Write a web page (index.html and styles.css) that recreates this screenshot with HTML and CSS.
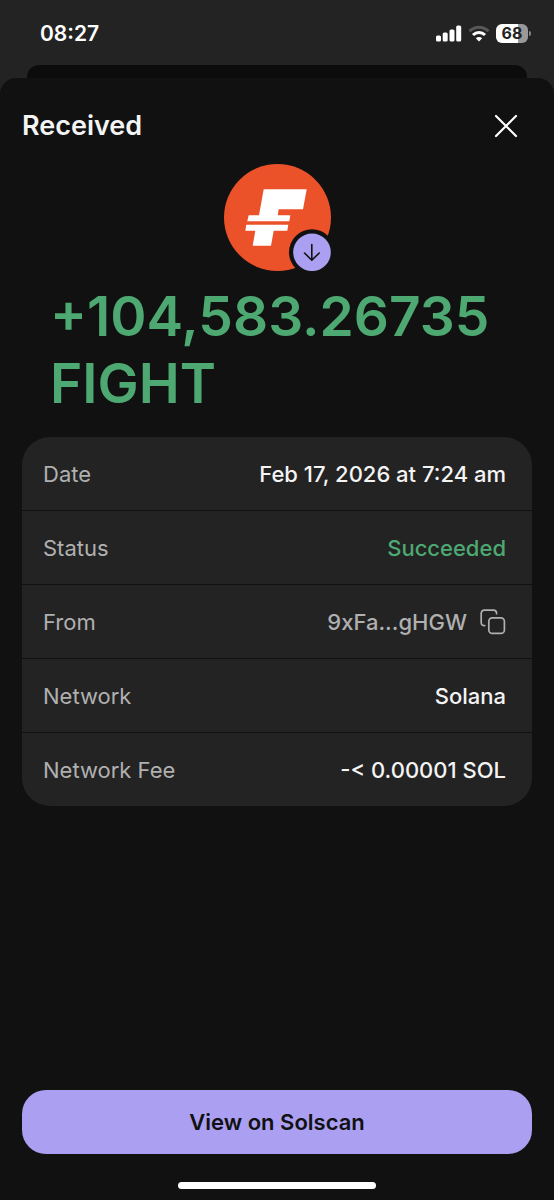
FILE: index.html
```html
<!DOCTYPE html>
<html lang="en">
    <head>
        <meta charset="utf-8">
        <meta name="viewport" content="width=device-width, initial-scale=1">
        <title>Received</title>
        <link rel="stylesheet" href="styles.css">
    </head>
    <body>
        <div class="statusbar">
            <span class="time">08:27</span>
            <div class="indicators">
                <svg class="signal" width="26" height="17" viewBox="0 0 26 17" fill="#fff">
                    <rect x="0" y="10.5" width="5" height="6" rx="1.5"/>
                    <rect x="6.7" y="7.5" width="5" height="9" rx="1.5"/>
                    <rect x="13.5" y="4.500" width="5" height="12" rx="1.5"/>
                    <rect x="20.2" y="0.5" width="5" height="16" rx="1.5"/>
                </svg>
                <svg class="wifi" width="22" height="17" viewBox="0 0 22 17" fill="none" stroke-width="3">
                    <path d="M1.5 6.2C6.700.8 15.300.8 20.5 6.2" stroke="#58585a"/>
                    <path d="M5 10C8.400 6.500 13.600 6.500 17 10" stroke="#fff"/>
                    <path d="M11 16.500L7.800 13.200C9.600 11.500 12.400 11.500 14.200 13.200Z" fill="#fff"/>
                </svg>
                <div class="battery">68</div>
            </div>
        </div>
        <div class="backsheet"></div>
        <main class="sheet">
            <header class="header">
                <h1>Received</h1>
                <button class="close" aria-label="Close">
                    <svg width="24" height="24" viewBox="0 0 24 24" fill="none" stroke="#fff" stroke-width="2.2" stroke-linecap="round">
                        <path d="M2 2L22 22M22 2L2 22"/>
                    </svg>
                </button>
            </header>

            <svg class="token" width="107" height="107" viewBox="0 0 107 107">
                <circle cx="53.5" cy="53.5" r="53.5" fill="#eb522a"/>
                <path fill="#fff" d="M39.7 25.3H82.7L79 45.3H54.7L53.7 51.3H66.3L65.3 57.3H23.3L24.7 51.3H35Z"/>
                <path fill="#fff" d="M22.3 60.7H64.3L63.3 66.7H49.7L47 81.7H28.7L31.3 66.7H21.3Z"/>
                <circle cx="88" cy="88.3" r="23" fill="#111"/>
                <circle cx="88" cy="88.3" r="18.8" fill="#ab9ff2"/>
                <path d="M87.8 80.5V96M80.5 89L87.8 96.2L95.2 89" fill="none" stroke="#111" stroke-width="1.6" stroke-linecap="round" stroke-linejoin="round"/>
            </svg>

            <p class="amount">+104,583.26735 FIGHT</p>

            <dl class="details">
                <div class="row">
                    <dt>Date</dt>
                    <dd>Feb 17, 2026 at 7:24 am</dd>
                </div>
                <div class="row">
                    <dt>Status</dt>
                    <dd class="succeeded">Succeeded</dd>
                </div>
                <div class="row">
                    <dt>From</dt>
                    <dd class="address">
                        9xFa...gHGW
                        <button class="copy" aria-label="Copy address">
                            <svg width="26" height="26" viewBox="0 0 26 26" fill="none" stroke="#b0b0b0" stroke-width="1.7" stroke-linecap="round">
                                <rect x="8.8" y="8.8" width="15.6" height="15.6" rx="3.5"/>
                                <path d="M4.7 16.7C2.3 16.7 1.2 15.5 1.2 13.5V4.5C1.2 2.3 2.3 1.2 4.5 1.2H13.2C15.5 1.2 16.6 2.4 16.6 4.7"/>
                            </svg>
                        </button>
                    </dd>
                </div>
                <div class="row">
                    <dt>Network</dt>
                    <dd>Solana</dd>
                </div>
                <div class="row">
                    <dt>Network Fee</dt>
                    <dd>-&lt; 0.00001 SOL</dd>
                </div>
            </dl>

            <button class="view">View on Solscan</button>
            <div class="homebar"></div>
        </main>
    </body>
</html>
```
FILE: styles.css
```css
* {
    box-sizing: border-box;
}

body {
    margin: 0;
    min-height: 100vh;
    display: flex;
    flex-direction: column;
    background-color: #232323;
    color: #f4f4f4;
    font-family: Inter, "Liberation Sans", sans-serif;
    font-size: 22px;
}

button {
    border: 0;
    padding: 0;
    background: none;
    color: inherit;
    font: inherit;
    cursor: pointer;
}

svg {
    display: block;
}

.statusbar {
    height: 65px;
    padding: 2px 23px 0 40px;
    display: flex;
    align-items: center;
    justify-content: space-between;
}

.time {
    font-size: 21px;
    font-weight: 600;
    color: #fff;
}

.indicators {
    display: flex;
    align-items: center;
    gap: 6px;
}

.battery {
    position: relative;
    width: 32px;
    margin-right: 3px;
    border-radius: 6px;
    background-image: linear-gradient(90deg, #fff 69%, #999 69%);
    color: #222;
    font-size: 16px;
    font-weight: 700;
    line-height: 19px;
    text-align: center;
}

/* battery tip */
.battery::after {
    content: "";
    position: absolute;
    right: -3px;
    top: 7px;
    width: 2px;
    height: 5px;
    border-radius: 0 2px 2px 0;
    background-color: #888;
}

/* the screen underneath, only its top edge shows */
.backsheet {
    height: 29px;
    margin: 0 27px -16px;
    border-radius: 12px 12px 0 0;
    background-color: #0c0c0c;
}

.sheet {
    flex: 1;
    display: flex;
    flex-direction: column;
    padding: 32px 22px 11px;
    border-radius: 16px 16px 0 0;
    background-color: #111;
}

.header {
    display: flex;
    align-items: center;
    justify-content: space-between;
    padding-right: 14px;
}

h1 {
    margin: 0;
    font-size: 27px;
    font-weight: 600;
    line-height: 32px;
}

.token {
    align-self: center;
    margin-top: 22px;
}

.amount {
    margin: 12px 28px 20px;
    color: #4da871;
    font-size: 55px;
    font-weight: 600;
    line-height: 67px;
}

.details {
    margin: 0;
    border-radius: 28px;
    background-color: #232323;
}

.row {
    display: flex;
    align-items: center;
    justify-content: space-between;
    height: 73px;
    padding: 0 26px 0 21px;
}

.row + .row {
    height: 74px;
    border-top: 1px solid #111;
}

dt {
    color: #b0b0b0;
}

dd {
    margin: 0;
    font-weight: 500;
}

.succeeded {
    color: #4da871;
}

.address {
    display: flex;
    align-items: center;
    gap: 13px;
    color: #b0b0b0;
}

.view {
    height: 64px;
    margin-top: auto;
    border-radius: 24px;
    background-color: #ab9ff2;
    color: #111;
    font-weight: 600;
}

.homebar {
    align-self: center;
    width: 198px;
    height: 7px;
    margin-top: 28px;
    border-radius: 4px;
    background-color: #fff;
}
```
